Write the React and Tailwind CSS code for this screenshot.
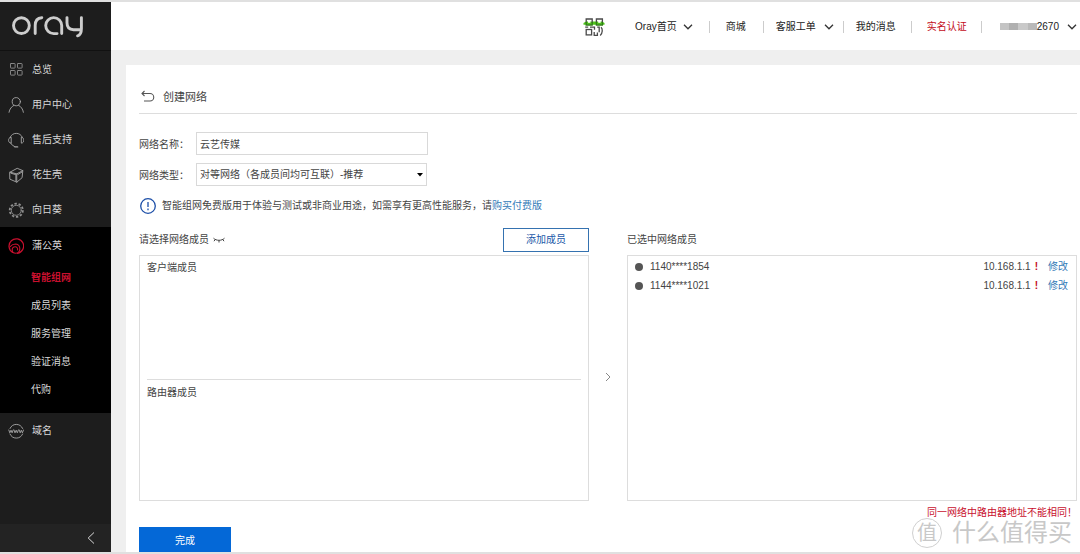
import React, { useState } from "react";

const menuTop = [
	{ label: "总览", icon: GridIcon },
	{ label: "用户中心", icon: UserIcon },
	{ label: "售后支持", icon: HeadsetIcon },
	{ label: "花生壳", icon: BoxIcon },
	{ label: "向日葵", icon: SunflowerIcon },
];

const subMenu = ["智能组网", "成员列表", "服务管理", "验证消息", "代购"];

const members = [
	{ id: "1140****1854", ip: "10.168.1.1" },
	{ id: "1144****1021", ip: "10.168.1.1" },
];

function Icon({ children, className = "text-[#a8a8a8]" }) {
	return (
		<svg
			viewBox="0 0 16 16"
			fill="none"
			stroke="currentColor"
			strokeWidth="0.9"
			strokeLinecap="round"
			strokeLinejoin="round"
			aria-hidden="true"
			className={`h-4 w-4 shrink-0 ${className}`}
		>
			{children}
		</svg>
	);
}

function GridIcon() {
	return (
		<Icon className="text-[#909090]">
			<rect x="2.5" y="1.5" width="4.6" height="4.6" rx="0.6" />
			<rect x="9.5" y="1.5" width="4.6" height="4.6" rx="0.6" />
			<rect x="2.5" y="8.5" width="4.6" height="4.6" rx="0.6" />
			<rect x="9.5" y="8.5" width="4.6" height="4.6" rx="0.6" />
		</Icon>
	);
}

function UserIcon() {
	return (
		<Icon>
			<circle cx="8.3" cy="4.7" r="4.1" />
			<path d="M1 15.3C1.6 11.8 3.6 9.6 6 8.3M15.4 15.3c-.6-3.5-2.4-5.7-4.8-7" />
		</Icon>
	);
}

function HeadsetIcon() {
	return (
		<Icon>
			<path d="M2.2 5.2A6.7 6.7 0 0 1 14.3 5.2M2.8 11.3A6.7 6.7 0 0 0 6.6 14.6" />
			<path d="M2.8 5.4C.9 5.6.6 7 .6 8.3s.5 2.6 2.2 2.8zM13.7 5.4c1.9.2 2 1.6 2 2.9s-.4 2.6-2 2.8z" />
			<path d="M7 14.9h2.6" strokeWidth="1.4" />
		</Icon>
	);
}

function BoxIcon() {
	return (
		<Icon>
			<path d="M2 5.2 9.2 1.3l5.6 2.3-.7 7.1-5.3 4.5-6.6-2.9zM2 5.2l6.7 1.7 6.1-3.3M8.7 6.9l.1 8.3" />
			<path d="m2.9 6.2 5 1.5v6.2M9.7 7.6l4.2-2.5" />
		</Icon>
	);
}

function SunflowerIcon() {
	return (
		<Icon className="text-[#909090]">
			<circle cx="8.3" cy="8.3" r="5" />
			<circle cx="8.3" cy="8.3" r="6.6" strokeWidth="1.8" strokeDasharray="2.4 1.75" strokeLinecap="butt" />
		</Icon>
	);
}

function DandelionIcon() {
	return (
		<Icon className="text-[#c8102e]">
			<path d="M4.6 14.4A7.3 7.3 0 1 1 9.6 15.3" strokeWidth="1.2" />
			<path d="M2.2 8.6C3.6 6.8 5.6 6 7.8 6a4.7 4.7 0 0 1 0 9.3C5.8 15.3 4.2 14 4.2 12s1.3-3.2 3-3.2 2.8 1.5 2.3 3.1" strokeWidth="1.1" />
		</Icon>
	);
}

function WwwIcon() {
	return (
		<Icon>
			<path d="M2 5.5a6.9 6.9 0 0 1 12.6 0M2 11a6.9 6.9 0 0 0 12.6 0" />
			<path d="m.8 7 1 2.8L3 7.2l1.1 2.6L5.2 7M6 7l1 2.8 1.2-2.6 1.1 2.6L10.4 7M11.2 7l1 2.8 1.1-2.6 1.1 2.6L15.5 7" />
		</Icon>
	);
}

function Logo() {
	return (
		<svg viewBox="0 0 74 24" fill="none" stroke="#cdcdcd" strokeWidth="2.9" strokeLinecap="round" className="h-6 w-[74px]" role="img" aria-label="oray">
			<ellipse cx="10.4" cy="11.6" rx="7.9" ry="7.9" />
			<path d="M24.2 19.6v-8.2c0-4.6 2.3-7.4 6.6-7.7" />
			<path d="M50.7 19.6v-8a8 8 0 1 0-8 8h3.4" />
			<path d="M56 3.6v5.2c0 4.6 2.7 6.9 6.5 6.9h7.7M70.4 3.6v11.2c0 4.3-1.4 6.4-3.8 7" />
		</svg>
	);
}

function QrIcon() {
	return (
		<svg viewBox="0 0 22 20" fill="none" stroke="#4a4a4a" strokeWidth="1.3" className="h-5 w-[22px]" aria-hidden="true">
			<path d="M.5 7.8V6L3 4.5h16L21.5 6v1.8z" fill="#4fc41c" stroke="none" />
			<path d="M3.2 5.4V2h6v3.4M13.4 5.4V2h6v3.4" />
			<path d="M3.2 5v3h6V5M13.4 5v3h6V5" stroke="#2f7d16" />
			<rect x="5" y="3.6" width="2.4" height="2.2" fill="#fff" stroke="none" />
			<rect x="15.2" y="3.6" width="2.4" height="2.2" fill="#fff" stroke="none" />
			<rect x="3.2" y="12.5" width="5.4" height="5.4" />
			<path d="M2.2 10.2h3M7 10.2h4.5v2.6M11.2 15v3.4h3.2v-3M14.2 10.2h2v5M18 10.2c1.8 1.5 1.8 6-.8 8.2" />
		</svg>
	);
}

function Chevron() {
	return (
		<svg viewBox="0 0 10 6" fill="none" stroke="#333" strokeWidth="1.3" className="h-[6px] w-[10px]" aria-hidden="true">
			<path d="m1 .8 4 4 4-4" />
		</svg>
	);
}

function Divider({ className }) {
	return <span className={`h-3 w-px bg-[#ccc] ${className}`} />;
}

function Watermark() {
	return (
		<div className="pointer-events-none absolute right-2 bottom-1 flex items-center gap-[10px] text-[#c8c8c8]">
			<span className="flex h-[30px] w-[30px] items-center justify-center rounded-full border border-[#d0d0d0] bg-white text-[20px] leading-none">
				值
			</span>
			<span className="text-[24px] leading-[24px]">什么值得买</span>
		</div>
	);
}

function Sidebar() {
	return (
		<aside className="flex w-[111px] shrink-0 flex-col bg-[#1d1d1d] text-[#d8d8d8]">
			<a href="#" className="flex h-[49px] shrink-0 items-center border-b border-[#111] pl-[11px]">
				<Logo />
			</a>
			<nav className="flex-1 pt-px">
				{menuTop.map((item) => (
					<a key={item.label} href="#" className="flex h-[35px] items-center gap-2 pl-2">
						<item.icon />
						{item.label}
					</a>
				))}
				<div className="bg-black pb-[9px]">
					<a href="#" className="flex h-[37px] items-center gap-2 pl-2">
						<DandelionIcon />
						蒲公英
					</a>
					{subMenu.map((label, index) => (
						<a
							key={label}
							href="#"
							className={`flex h-7 items-center pl-[31px] ${index === 0 ? "font-bold text-[#c8102e]" : ""}`}
						>
							{label}
						</a>
					))}
				</div>
				<a href="#" className="flex h-[35px] items-center gap-2 pl-2">
					<WwwIcon />
					域名
				</a>
			</nav>
			<button type="button" aria-label="收起" className="flex h-7 shrink-0 items-center justify-end bg-[#232323] pr-4">
				<svg viewBox="0 0 8 12" fill="none" stroke="#d8d8d8" className="h-3 w-2" aria-hidden="true">
					<path d="M7 .5 1.2 6 7 11.5" />
				</svg>
			</button>
		</aside>
	);
}

function TopBar() {
	return (
		<header className="flex h-12 shrink-0 items-center justify-end bg-white pt-px pr-[3px] text-[#222]">
			<QrIcon />
			<a href="#" className="ml-[30px] flex items-center gap-[6px]">
				Oray首页 <Chevron />
			</a>
			<Divider className="mx-4" />
			<a href="#">商城</a>
			<Divider className="ml-[17px] mr-3" />
			<a href="#" className="flex items-center gap-2">
				客服工单 <Chevron />
			</a>
			<Divider className="ml-[9px] mr-3" />
			<a href="#">我的消息</a>
			<Divider className="mx-[15px]" />
			<a href="#" className="text-[#c30d23]">
				实名认证
			</a>
			<Divider className="ml-[14px] mr-[18px]" />
			<a href="#" className="flex items-center">
				<span className="flex h-[7px] w-[37px]">
					<span className="flex-1 bg-[#c4c4c4]" />
					<span className="flex-1 bg-[#b0b0b0]" />
					<span className="flex-1 bg-[#c9c9c9]" />
					<span className="flex-1 bg-[#b9b9b9]" />
				</span>
				<span className="mr-2">2670</span>
				<Chevron />
			</a>
		</header>
	);
}

export default function App() {
	const [name, setName] = useState("云艺传媒");
	const [type, setType] = useState("peer");

	return (
		<div className="relative flex h-screen overflow-hidden border-t-2 border-b-2 border-[#e0e0e0] bg-[#efefef] font-['Liberation_Sans','Noto_Sans_CJK_SC',sans-serif] text-[10px] leading-[14px] text-[#444]">
			<Sidebar />
			<div className="flex min-w-0 flex-1 flex-col">
				<TopBar />
				<main className="mt-[15px] ml-[15px] flex-1 bg-white pr-[3px] pl-[13px]">
					<h1 className="flex h-[49px] items-center gap-2 border-b border-[#ddd] pt-4 text-[11px]">
						<button type="button" aria-label="返回">
							<svg viewBox="0 0 16 14" fill="none" stroke="#555" strokeWidth="1.1" className="h-[14px] w-4" aria-hidden="true">
								<path d="M5.5 1 3 3.5 5.5 6M3 3.5h8a3.7 3.7 0 0 1 0 7.5H5" />
							</svg>
						</button>
						创建网络
					</h1>

					<div className="mt-[18px] flex items-center">
						<label htmlFor="netName" className="w-[57px] pt-[2px]">
							网络名称：
						</label>
						<input
							type="text"
							id="netName"
							value={name}
							onChange={(e) => setName(e.target.value)}
							className="h-[23px] w-[232px] border border-[#d9d9d9] px-[3px] outline-none"
						/>
					</div>
					<div className="mt-2 flex items-center">
						<label htmlFor="netType" className="w-[57px] pt-[2px]">
							网络类型：
						</label>
						<div className="relative">
							<select
								id="netType"
								value={type}
								onChange={(e) => setType(e.target.value)}
								className="h-[23px] w-[231px] appearance-none border border-[#d9d9d9] bg-white px-[3px] outline-none"
							>
								<option value="peer">对等网络（各成员间均可互联）-推荐</option>
							</select>
							<svg viewBox="0 0 6 4" className="pointer-events-none absolute top-[10px] right-1 h-1 w-[6px]" aria-hidden="true">
								<path d="M0 0h6L3 3.5z" fill="#000" />
							</svg>
						</div>
					</div>

					<p className="mt-3 flex h-4 items-center">
						<svg viewBox="0 0 18 18" fill="none" stroke="#1d4fa8" strokeWidth="1.3" className="mr-[5px] h-[18px] w-[18px]" aria-hidden="true">
							<circle cx="9" cy="9" r="7.3" />
							<path d="M9 5v5M9 11.6v1.6" />
						</svg>
						<span>
							智能组网免费版用于体验与测试或非商业用途，如需享有更高性能服务，请
							<a href="#" className="text-[#337ab7]">购买付费版</a>
						</span>
					</p>

					<div className="mt-[14px] grid grid-cols-[1fr_38px_1fr]">
						<section>
							<div className="flex h-6 items-center justify-between">
								<h2 className="flex items-center gap-1">
									请选择网络成员
									<svg viewBox="0 0 12 6" fill="none" stroke="#444" className="h-[6px] w-3" aria-hidden="true">
										<path d="M.5 1.2C3.3 4 8.7 4 11.5 1.2M2.2 2.5 1 4.2M6 3.3v2.2M9.8 2.5 11 4.2" />
									</svg>
								</h2>
								<button type="button" className="h-6 w-[86px] border border-[#3572b0] text-[#1b57a8]">
									添加成员
								</button>
							</div>
							<div className="mt-[3px] flex h-[246px] flex-col border border-[#ddd] px-[7px]">
								<div className="flex-1 border-b border-[#ddd] pt-[5px]">客户端成员</div>
								<div className="h-[120px] pt-[6px]">路由器成员</div>
							</div>
						</section>

						<div className="flex items-center justify-center">
							<svg viewBox="0 0 6 10" fill="none" stroke="#888" className="mt-6 h-[10px] w-[6px]" aria-hidden="true">
								<path d="m1 1 4 4-4 4" />
							</svg>
						</div>

						<section>
							<h2 className="flex h-6 items-center">已选中网络成员</h2>
							<ul className="mt-[3px] h-[246px] border border-[#ddd] pt-[1px] pr-2 pl-[7px]">
								{members.map((member) => (
									<li key={member.id} className="flex h-[19px] items-center">
										<span className="mr-[7px] h-2 w-2 rounded-full bg-[#555]" />
										<span className="flex-1">{member.id}</span>
										<span>{member.ip}</span>
										<span className="ml-1 font-bold text-[#c30d23]">!</span>
										<a href="#" className="ml-[10px] text-[#337ab7]">修改</a>
									</li>
								))}
							</ul>
						</section>
					</div>

					<p className="mt-[5px] text-right text-[#c8102e]">同一网络中路由器地址不能相同！</p>
					<button type="button" className="mt-[7px] h-7 w-[92px] bg-[#0468d7] text-white">
						完成
					</button>
				</main>
			</div>
			<Watermark />
		</div>
	);
}
